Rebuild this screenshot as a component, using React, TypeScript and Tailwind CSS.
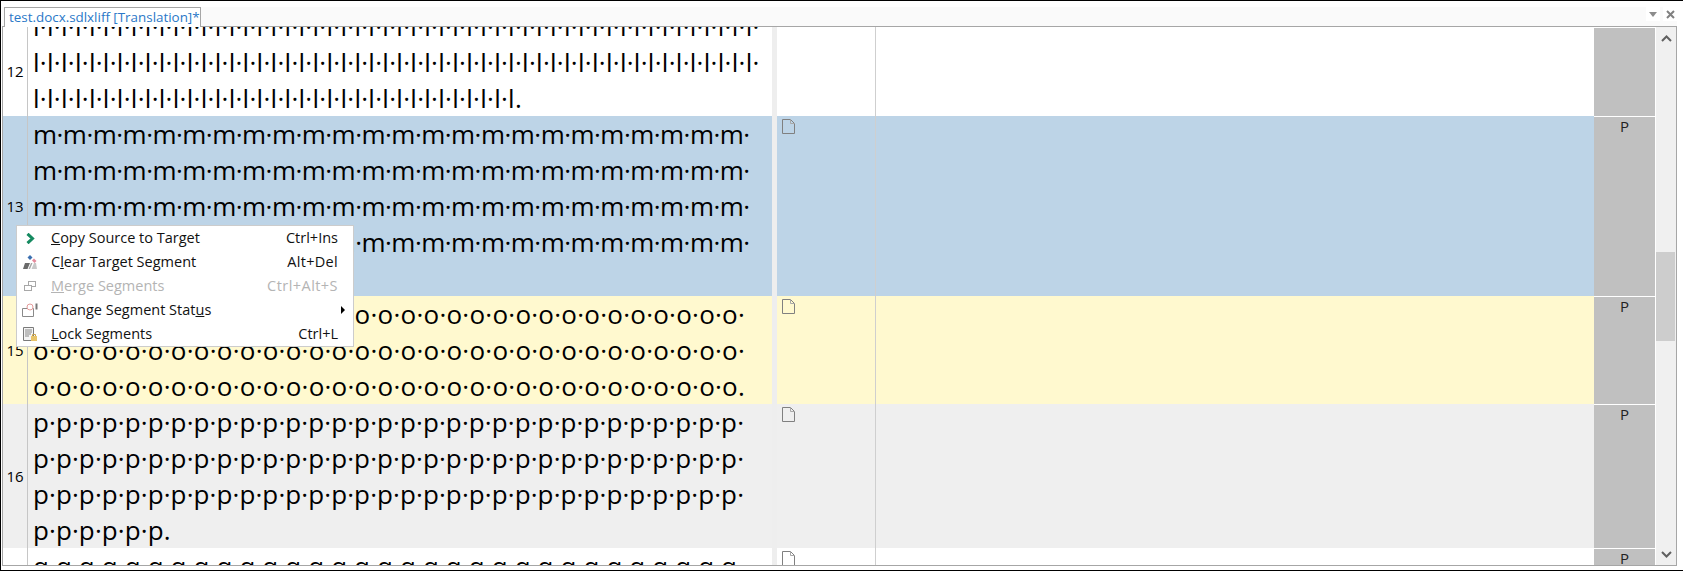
const font = { fontFamily: '"Open Sans", sans-serif' };

function rep(u: string, n: number, end: string) {
  return Array(n).fill(u).join("·") + end;
}

function Doc() {
  return (
    <svg width="13" height="15" viewBox="0 0 13 15" className="block" fill="none" stroke="#808080" strokeWidth="1">
      <path d="M0.500 0.500H8.500L12.500 4.500V14.500H0.500Z" />
      <path d="M8.500 0.500V4.500H12.500" stroke="#a8a8a8" />
    </svg>
  );
}

type RowProps = {
  num?: string;
  lines: string[];
  height: string;
  bg: string;
  track: string;
  end?: boolean;
  p?: boolean;
};

function Row({ num, lines, height, bg, track, end, p = true }: RowProps) {
  return (
    <div className={`flex ${height} ${bg} shrink-0 overflow-hidden`}>
      <div className="w-[25px] shrink-0 flex items-center justify-center text-[15px] text-black border-r border-[#c6c6c6] h-full">
        {num}
      </div>
      <div className={`w-[744px] shrink-0 pl-[5px] flex flex-col ${end ? "justify-end" : "justify-start"} overflow-hidden h-full`}>
        {lines.map((l, i) => (
          <div key={i} className={`h-[36px] shrink-0 leading-[36px] text-[26px] text-black whitespace-nowrap ${track}`}>
            {l}
          </div>
        ))}
      </div>
      <div className="w-[5px] shrink-0 bg-[#eeeeee] h-full" />
      <div className="w-[99px] shrink-0 border-r border-[#cfcfcf] h-full pl-[5px] pt-[3px]">
        {p && <Doc />}
      </div>
      <div className="flex-1" />
      <div className="w-[61px] shrink-0 bg-[#c0c0c0] border-t border-white text-center text-[15px] text-[#222] leading-[18px] h-full">
        {p && "P"}
      </div>
    </div>
  );
}

function MenuItem({ icon, label, shortcut, disabled, arrow, shortcutClass = "" }: { icon: React.ReactNode; label: React.ReactNode; shortcut?: string; disabled?: boolean; arrow?: boolean; shortcutClass?: string }) {
  return (
    <div className={`h-[24px] flex items-center text-[14.5px] ${disabled ? "text-[#b4b4b4]" : "text-[#111111]"}`}>
      <div className="w-[26px] mr-[8px] shrink-0 flex items-center justify-center">{icon}</div>
      <div className="flex-1 whitespace-nowrap">{label}</div>
      {shortcut && <div className={`pr-[15px] whitespace-nowrap ${shortcutClass}`}>{shortcut}</div>}
      {arrow && <div className="w-0 h-0 mr-[8px] border-y-[4px] border-y-transparent border-l-[4px] border-l-black" />}
    </div>
  );
}

function ContextMenu() {
  return (
    <div className="absolute left-[15px] top-[224px] w-[338px] h-[122px] bg-white border border-[#cccccc]">
      <MenuItem
        label={<><u>C</u>opy Source to Target</>}
        shortcut="Ctrl+Ins"
        icon={
          <svg width="9" height="11" viewBox="0 0 9 11" fill="none" stroke="#158a60" strokeWidth="3">
            <path d="M1.500 0.800L6.500 5.500L1.500 10.200" />
          </svg>
        }
      />
      <MenuItem
        label={<>C<u>l</u>ear Target Segment</>}
        shortcut="Alt+Del"
        shortcutClass="tracking-[0.3px]"
        icon={
          <svg width="14" height="14" viewBox="0 0 14 14">
            <path d="M4.500 2.500L7 0L9.500 2.500L7 5Z" fill="#3b6fb0" />
            <path d="M9 5.500L11 3.500L13.500 6L11.500 8Z" fill="#e58a9b" />
            <path d="M2 8H7L4.500 14H0Z" fill="#6a6a6a" />
            <path d="M8 8H9.500L7 14H5.500Z" fill="#a5a5a5" />
            <path d="M11 8H13L14 14H8.500Z" fill="#c8c8c8" />
          </svg>
        }
      />
      <MenuItem
        disabled
        label={<><u>M</u>erge Segments</>}
        shortcut="Ctrl+Alt+S"
        shortcutClass="tracking-[0.45px]"
        icon={
          <svg width="12" height="10" viewBox="0 0 12 10" fill="none" stroke="#a8a8a8">
            <rect x="4.500" y="0.500" width="7" height="5" />
            <rect x="0.500" y="4.500" width="7" height="5" fill="white" />
          </svg>
        }
      />
      <MenuItem
        arrow
        label={<>Change Segment Stat<u>u</u>s</>}
        icon={
          <svg width="16" height="14" viewBox="0 0 16 14" fill="none">
            <path d="M0.500 5.500H11.500V13.500H0.500Z" stroke="#8a8a8a" />
            <circle cx="8" cy="4" r="3" stroke="#e49a9a" fill="white" />
            <path d="M14.500 0.500V6.500" stroke="#777" strokeWidth="2" />
          </svg>
        }
      />
      <MenuItem
        label={<><u>L</u>ock Segments</>}
        shortcut="Ctrl+L"
        icon={
          <svg width="14" height="14" viewBox="0 0 14 14" fill="none">
            <path d="M0.500 0.500H10.500V13.500H0.500Z" stroke="#7a7a7a" fill="#f4f4f4" />
            <path d="M2 3H9M2 5H9M2 7H8M2 9H6" stroke="#888" />
            <rect x="8" y="9" width="6" height="5" fill="#e8c46a" />
            <path d="M9.500 9V7.500H12.500V9" stroke="#c9a24a" />
          </svg>
        }
      />
    </div>
  );
}

export default function App() {
  return (
    <div className="relative w-[1683px] h-[571px] bg-white overflow-hidden border-t border-b border-l border-black flex flex-col pl-[1px] pr-[6px] pb-[4px]" style={font}>
      <div className="h-[25px] shrink-0 flex flex-col justify-end">
        <div className="h-[19px] bg-[#fafafa] flex relative z-10">
          <div className="ml-[2px] h-[20px] w-[197px] bg-white border border-b-0 border-[#a6a6a6] text-[13.4px] leading-[18px] pl-[4px] text-[#2a78c8] whitespace-nowrap">
            test.docx.sdlxliff [Translation]*
          </div>
          <div className="flex-1" />
          <div className="w-[14px] h-[14px] bg-white mr-[3px] flex items-center justify-center">
            <div className="w-0 h-0 border-x-[4.5px] border-x-transparent border-t-[5px] border-t-[#8c8c8c]" />
          </div>
          <div className="w-[14px] h-[14px] bg-white flex items-center justify-center">
            <svg width="9" height="9" viewBox="0 0 9 9" stroke="#808080" strokeWidth="2"><path d="M1 1L8 8M8 1L1 8" /></svg>
          </div>
        </div>
      </div>
      <div className="flex-1 flex border border-[#a6a6a6] overflow-hidden min-h-0">
        <div className="flex-1 flex flex-col min-w-0 overflow-hidden">
          <Row num="12" end height="h-[89px]" bg="bg-white" track="tracking-[0.29px]" p={false} lines={[rep("l", 52, "·"), rep("l", 52, "·"), rep("l", 35, ".")]} />
          <Row num="13" height="h-[180px]" bg="bg-[#bdd4e7]" track="tracking-[-0.52px]" lines={[rep("m", 24, "·"), rep("m", 24, "·"), rep("m", 24, "·"), rep("m", 24, "·"), rep("m", 6, ".")]} />
          <Row num="15" height="h-[108px]" bg="bg-[#fff9cf]" track="tracking-[0.25px]" lines={[rep("o", 31, "·"), rep("o", 31, "·"), rep("o", 31, ".")]} />
          <Row num="16" height="h-[144px]" bg="bg-[#efefef]" track="tracking-[0.1px]" lines={[rep("p", 31, "·"), rep("p", 31, "·"), rep("p", 31, "·"), rep("p", 6, ".")]} />
          <Row height="h-[17px]" bg="bg-white" track="tracking-[0.1px]" lines={[rep("q", 31, "·")]} />
        </div>
        <div className="w-[21px] shrink-0 bg-[#f0f0f0] border-l border-white flex flex-col items-center">
          <svg width="11" height="7" viewBox="0 0 11 7" fill="none" stroke="#606060" strokeWidth="2" className="mt-[8px]"><path d="M1 6L5.500 1.500L10 6" /></svg>
          <div className="w-[19px] h-[89px] bg-[#cdcdcd] mt-[210px] self-start" />
          <div className="flex-1" />
          <svg width="11" height="7" viewBox="0 0 11 7" fill="none" stroke="#606060" strokeWidth="2" className="mb-[7px]"><path d="M1 1L5.500 5.500L10 1" /></svg>
        </div>
      </div>
      <ContextMenu />
    </div>
  );
}
